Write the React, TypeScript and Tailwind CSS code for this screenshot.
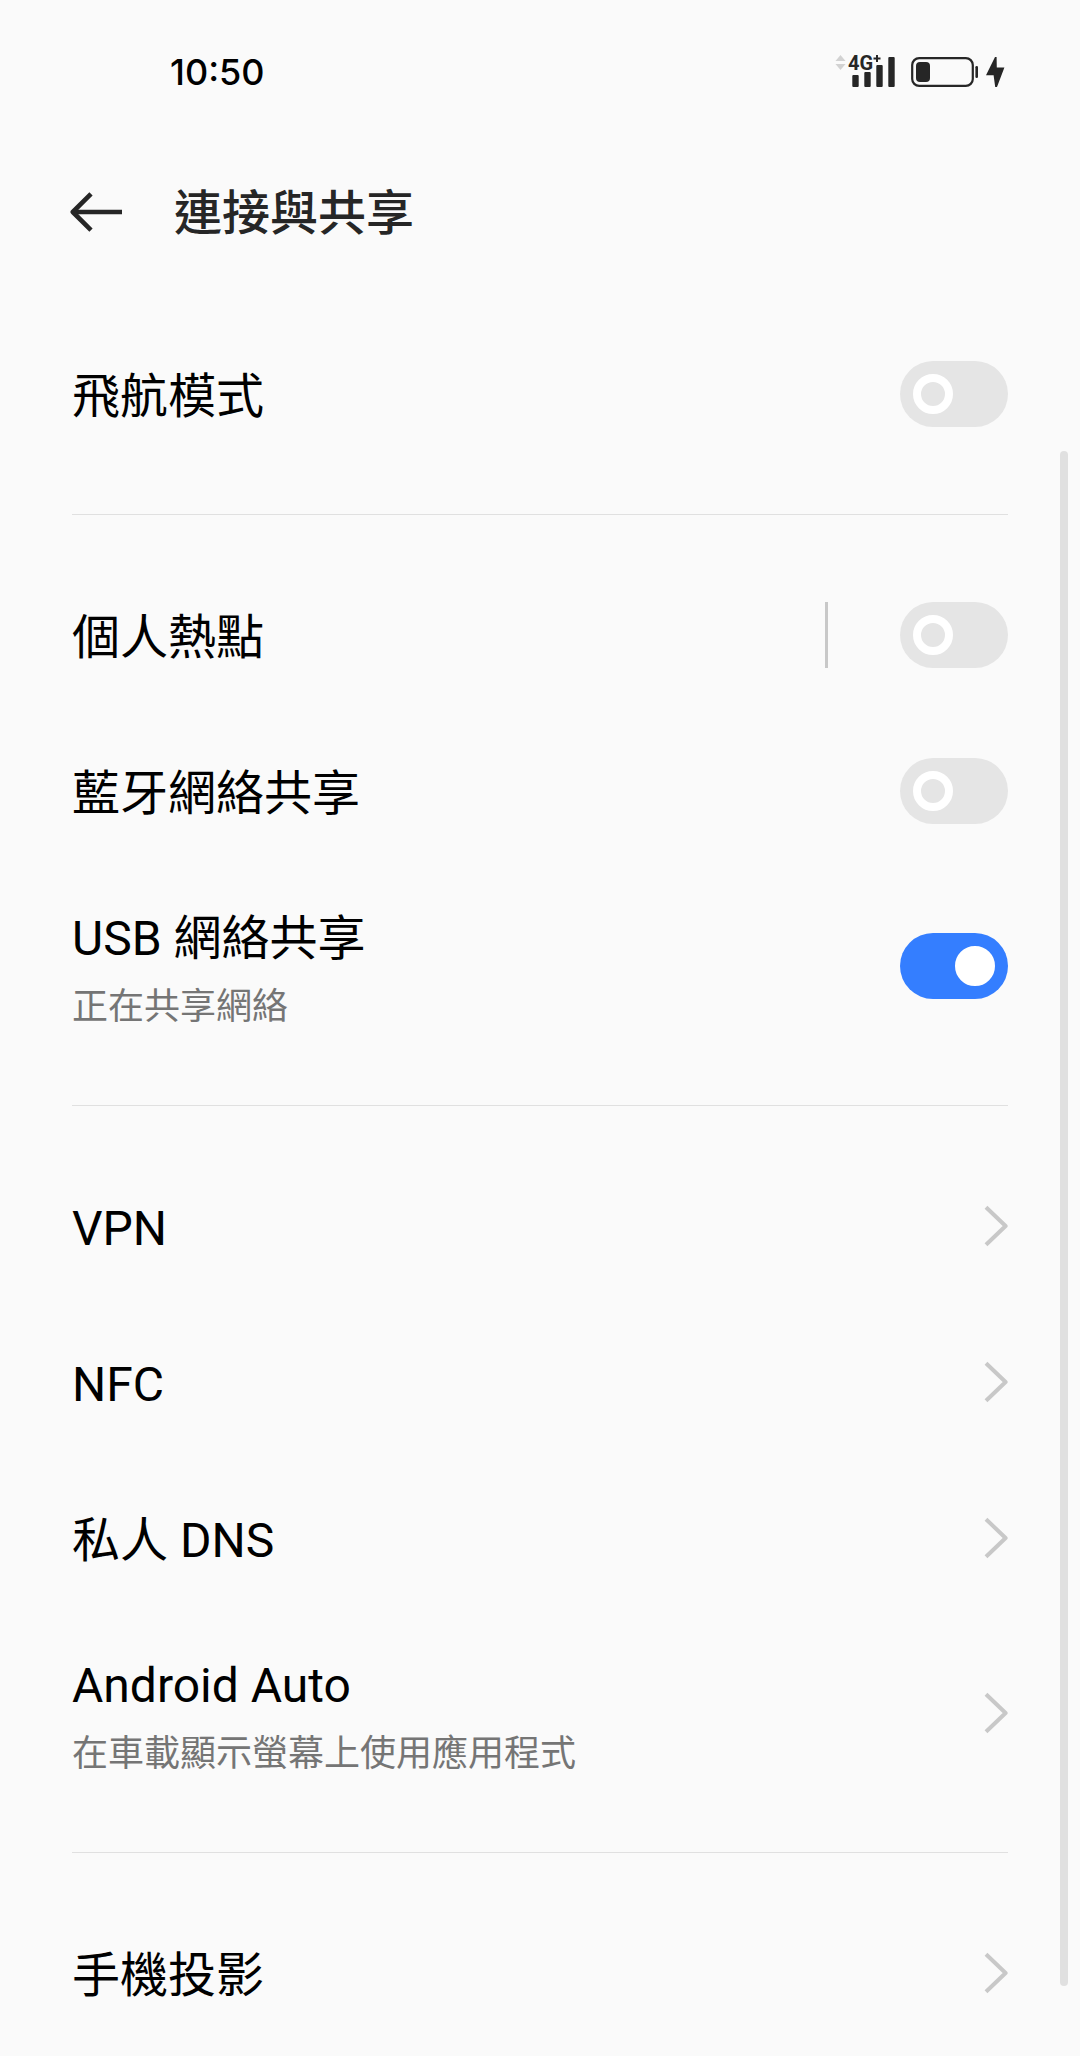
import React, { FC, useId, useState } from 'react';

export default function App() {
    return (
        <div className="relative min-h-screen bg-[#fafafa] text-black font-[Roboto,'Noto_Sans_CJK_TC',sans-serif]" lang="zh-Hant">
            <StatusBar />
            <Header title="連接與共享" />

            <main className="px-[72px] pt-9">
                <SwitchRow title="飛航模式" />
                <Divider />
                <SwitchRow title="個人熱點" separated />
                <SwitchRow title="藍牙網絡共享" />
                <SwitchRow title="USB 網絡共享" summary="正在共享網絡" defaultOn />
                <Divider />
                <LinkRow title="VPN" href="#vpn" />
                <LinkRow title="NFC" href="#nfc" />
                <LinkRow title="私人 DNS" href="#dns" />
                <LinkRow title="Android Auto" summary="在車載顯示螢幕上使用應用程式" href="#auto" />
                <Divider />
                <LinkRow title="手機投影" href="#cast" />
            </main>

            <div className="absolute right-3 top-[451px] bottom-[70px] w-2 rounded-full bg-[#e0e0e0]" />
        </div>
    );
}

const StatusBar: FC = () => (
    <div className="h-36 flex flex-row items-center justify-between pl-[170px] pr-[75px]">
        <time className="text-4xl font-[Inter,sans-serif] font-medium">10:50</time>
        <StatusIcons />
    </div>
);

const StatusIcons: FC = () => (
    <svg className="overflow-visible" width="170" height="36" viewBox="0 0 170 36" fill="#262626">
        {/* data activity */}
        <path d="M5.5 1L10.5 7H0.5Z" fill="#d2d2d2" />
        <path d="M5.5 16L10.5 10H0.5Z" fill="#d2d2d2" />

        {/* signal */}
        <text x="13" y="16" fontSize="20" fontWeight="700" fontFamily="Roboto, sans-serif">4G</text>
        <path d="M42 1V8M38.5 4.5H45.5" stroke="#262626" strokeWidth="2" />
        <rect x="17.3" y="21" width="6.4" height="12" rx="1" />
        <rect x="29.3" y="18" width="6.4" height="15" rx="1" />
        <rect x="41.3" y="11" width="6.4" height="22" rx="1" />
        <rect x="53.3" y="3" width="6.4" height="30" rx="1" />

        {/* battery */}
        <rect x="77.2" y="4.1" width="60.6" height="27.8" rx="7" fill="none" stroke="#262626" strokeWidth="2.2" />
        <rect x="81" y="8" width="14" height="20" rx="4" />
        <rect x="140.4" y="12" width="2.6" height="12" rx="1.2" />
        <path d="M160 3L151 21.2H158.6L160.2 33H162L169.4 13.6H161.8L161.6 3Z" />
    </svg>
);

interface HeaderProps {
    title: string,
}

const Header: FC<HeaderProps> = ({ title }) => (
    <header className="h-[136px] flex flex-row items-center gap-[52px] px-[70px] text-[#262626]">
        <button type="button" aria-label="返回">
            <svg width="52" height="40" viewBox="0 0 52 40" fill="none" stroke="currentColor" strokeWidth="4.6">
                <path d="M3 20H52" />
                <path d="M21 1.8L2.8 20L21 38.2" strokeLinejoin="round" />
            </svg>
        </button>
        <h1 className="text-5xl leading-[64px] font-medium pt-1">{title}</h1>
    </header>
);

const Divider: FC = () => <hr className="my-[42px] border-t border-[#e0e0e0]" />;

interface RowTextProps {
    title: string,
    summary?: string,
}

const RowText: FC<RowTextProps> = ({ title, summary }) => (
    <span className="flex flex-col gap-3 pt-1.5">
        <span className="text-5xl leading-[64px]">{title}</span>
        {summary && <span className="text-4xl leading-[48px] text-[#757575]">{summary}</span>}
    </span>
);

interface SwitchRowProps {
    title: string,
    summary?: string,
    separated?: boolean,
    defaultOn?: boolean,
}

const SwitchRow: FC<SwitchRowProps> = ({ title, summary, separated = false, defaultOn = false }) => {
    const id = useId();
    const [on, setOn] = useState(defaultOn);

    return (
        <div className={`${summary ? 'h-[194px]' : 'h-[156px]'} flex flex-row items-center`}>
            <label htmlFor={id} className="flex-1">
                <RowText title={title} summary={summary} />
            </label>
            {separated && <span className="w-[3px] h-[66px] mr-[72px] bg-[#c8c8c8]" />}
            <input
                id={id}
                type="checkbox"
                role="switch"
                checked={on}
                onChange={(e) => setOn(e.target.checked)}
                className="appearance-none shrink-0 flex items-center w-[108px] h-[66px] px-[13px] rounded-full bg-[#e5e5e5] before:size-10 before:rounded-full before:border-8 before:border-white checked:justify-end checked:bg-[#347eff] checked:before:bg-white"
            />
        </div>
    );
};

interface LinkRowProps {
    title: string,
    summary?: string,
    href: string,
}

const LinkRow: FC<LinkRowProps> = ({ title, summary, href }) => (
    <a href={href} className={`${summary ? 'h-[194px]' : 'h-[156px]'} flex flex-row items-center justify-between`}>
        <RowText title={title} summary={summary} />
        <svg width="24" height="42" viewBox="0 0 24 42" fill="none" stroke="#c8c8c8" strokeWidth="4">
            <path d="M2 2.2L21.6 21L2 39.8" strokeLinejoin="round" />
        </svg>
    </a>
);
